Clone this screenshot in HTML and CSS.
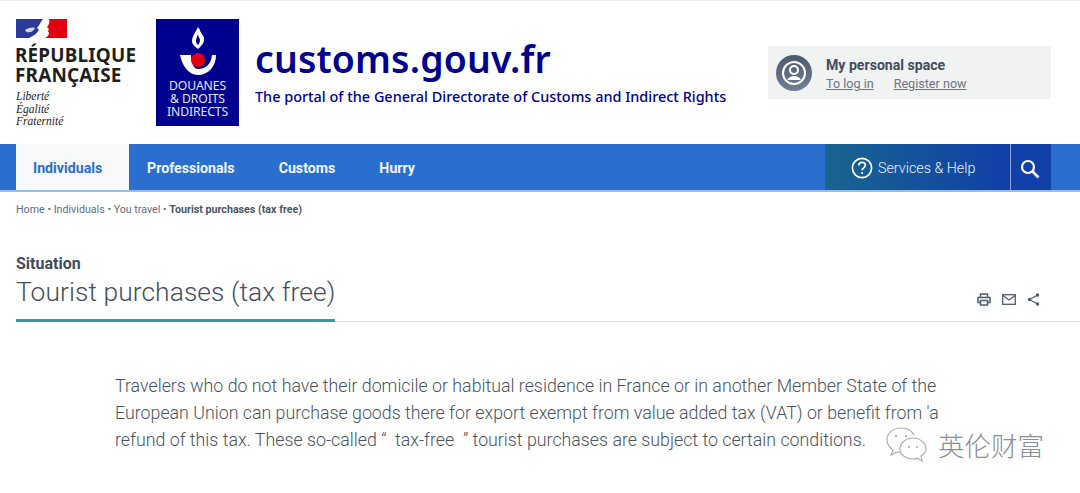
FILE: index.html
```html
<!DOCTYPE html>
<html lang="en">
<head>
<meta charset="utf-8">
<title>Tourist purchases (tax free)</title>
<link rel="stylesheet" href="styles.css">
</head>
<body>
<header class="masthead">
  <div class="rf">
    <svg class="rf-flag" width="51" height="19" viewBox="0 0 51 19"><rect width="51" height="19" fill="#fff"/><path d="M0 0H27C24 4 23 7 21 9L23 11C21 14 18 17 13 19H0z" fill="#2b3a97"/><path d="M9 11c3-2 7-3 10-2-1 2-3 4-5 4-2 1-4 0-5-2z" fill="#cfd4ea"/><path d="M33 0H51V19H29C31 18 33 16 33 14L32 12 33 10 31 8C33 6 34 3 33 0z" fill="#e1000f"/></svg>
    <div class="rf-name">RÉPUBLIQUE<br>FRANÇAISE</div>
    <div class="rf-motto">Liberté<br>Égalité<br>Fraternité</div>
  </div>
  <div class="ddi">
    <svg class="ddi-mark" width="38" height="50" viewBox="0 0 38 50"><path d="M19 0C17 5 13 9 13 14 13 18 17 20 19 22 22 19 25 17 25 12 25 8 21 6 21 3z" fill="#fff"/><path d="M19 7C18 10 17 12 17 14 17 16 18 17 19 18 20 17 21 15 21 13 21 11 19 10 19 7z" fill="#00008f"/><path d="M1 28H12C12 36 15 42 19 42 26 42 32 38 33 28H37C37 40 29 48 19 48 9 48 3 38 1 28z" fill="#fff"/><circle cx="19" cy="33" r="7" fill="#e1000f"/></svg>
    <div class="ddi-name">DOUANES<br>&amp; DROITS<br>INDIRECTS</div>
  </div>
  <div class="portal">
    <div class="portal-name">customs.gouv.fr</div>
    <div class="portal-tag">The portal of the General Directorate of Customs and Indirect Rights</div>
  </div>
  <div class="space">
    <svg class="space-ico" width="36" height="36" viewBox="0 0 36 36"><defs><linearGradient id="g" x1="0" y1="0" x2="0" y2="1"><stop offset="0" stop-color="#4d5a6b"/><stop offset="1" stop-color="#6f7f95"/></linearGradient></defs><circle cx="18" cy="18" r="18" fill="url(#g)"/><circle cx="18" cy="18" r="11" fill="none" stroke="#fff" stroke-width="2"/><circle cx="18" cy="15" r="4" fill="none" stroke="#fff" stroke-width="2"/><path d="M11 25c2-3 4-4 7-4s5 1 7 4" fill="#fff"/></svg>
    <div class="space-text">
      <div class="space-title">My personal space</div>
      <div class="space-links"><a href="#">To log in</a><a href="#">Register now</a></div>
    </div>
  </div>
</header>
<nav class="nav">
  <ul class="tabs">
    <li class="tab tab-on">Individuals</li>
    <li class="tab">Professionals</li>
    <li class="tab">Customs</li>
    <li class="tab">Hurry</li>
  </ul>
  <div class="help">
    <svg width="22" height="22" viewBox="0 0 22 22"><circle cx="11" cy="11" r="9.6" fill="none" stroke="#fff" stroke-width="1.7"/><path d="M7.8 8.6c0-2 1.5-3.2 3.3-3.2s3.2 1.2 3.2 2.9c0 2.5-3.2 2.6-3.2 5" fill="none" stroke="#fff" stroke-width="1.7"/><circle cx="11.1" cy="16" r="1.1" fill="#fff"/></svg>
    <span>Services &amp; Help</span>
  </div>
  <div class="find">
    <svg width="20" height="20" viewBox="0 0 20 20"><circle cx="8" cy="8" r="6" fill="none" stroke="#fff" stroke-width="2.2"/><path d="M12.5 12.5l6 6" stroke="#fff" stroke-width="2.6"/></svg>
  </div>
</nav>
<div class="crumbs">Home • Individuals • You travel • <b>Tourist purchases (tax free)</b></div>
<section class="head">
  <div class="kicker">Situation</div>
  <div class="title-row">
    <h1 class="title">Tourist purchases (tax free)</h1>
    <div class="tools">
      <svg width="14" height="13" viewBox="0 0 14 13"><path d="M3.5 4V1h7v3M3.5 9.5H1V4.5h12v5h-2.5M3.5 7.5h7V12h-7z" fill="none" stroke="#4f5b6b" stroke-width="1.5"/></svg>
      <svg width="14" height="11" viewBox="0 0 14 11"><rect x=".7" y=".7" width="12.6" height="9.6" fill="none" stroke="#4f5b6b" stroke-width="1.3"/><path d="M1 1.5l6 4.5 6-4.5" fill="none" stroke="#4f5b6b" stroke-width="1.3"/></svg>
      <svg width="13" height="13" viewBox="0 0 13 13"><path d="M10.5 2L2.5 6.5l8 4.5" fill="none" stroke="#4f5b6b" stroke-width="1.1"/><circle cx="10.5" cy="2" r="1.7" fill="#4f5b6b"/><circle cx="2.5" cy="6.5" r="1.7" fill="#4f5b6b"/><circle cx="10.5" cy="11" r="1.7" fill="#4f5b6b"/></svg>
    </div>
  </div>
</section>
<main class="body-text">
  <p>Travelers who do not have their domicile or habitual residence in France or in another Member State of the<br>European Union can purchase goods there for export exempt from value added tax (VAT) or benefit from 'a<br>refund of this tax. These so-called “&nbsp; tax-free &nbsp;” tourist purchases are subject to certain conditions.</p>
  <div class="mark">
    <svg width="42" height="36" viewBox="0 0 42 36"><path d="M15 1C7 1 1 6 1 13c0 4 2 7 6 10l-2 5 6-3c2 .6 3 .8 5 .8" fill="none" stroke="#aab0b5" stroke-width="1.2"/><path d="M28 8c-2-4-7-7-13-7" fill="none" stroke="#aab0b5" stroke-width="1.2"/><path d="M27 11c-7 0-13 5-13 11s6 10 13 10c2 0 3 0 4-1l5 3-1-5c3-2 5-4 5-7 0-6-6-11-13-11z" fill="#fff" stroke="#aab0b5" stroke-width="1.2"/><circle cx="10" cy="9" r="1.2" fill="#aab0b5"/><circle cx="20" cy="9" r="1.2" fill="#aab0b5"/><circle cx="23" cy="20" r="1.1" fill="#aab0b5"/><circle cx="31" cy="20" r="1.1" fill="#aab0b5"/></svg>
    <span>英伦财富</span>
  </div>
</main>
</body>
</html>
```
FILE: styles.css
```css
* { box-sizing: border-box; }
html, body { margin: 0; padding: 0; }
body { width: 1080px; height: 493px; overflow: hidden; background: #fff; font-family: Roboto, "Liberation Sans", sans-serif; color: #3f4a5a; border-top: 1px solid #eceded; }
.masthead { height: 143px; display: flex; align-items: flex-start; padding: 18px 0 0 16px; }
.rf { width: 140px; height: 110px; }
.rf-flag { display: block; }
.rf-name { margin: 7px 0 0 -1px; font: 700 18.9px/20px "Noto Sans", "Open Sans", sans-serif; color: #1e1e1e; letter-spacing: .2px; }
.rf-motto { margin-top: 5px; font: italic 11.5px/12.6px "Liberation Serif", serif; color: #222; }
.ddi { width: 83px; height: 107px; background: #00008f; display: flex; flex-direction: column; align-items: center; padding-top: 8px; color: #e4e7f5; }
.ddi-mark { display: block; }
.ddi-name { margin-top: 2px; font: 400 12.2px/13px "Noto Sans", sans-serif; text-align: center; letter-spacing: -.1px; }
.portal { margin-left: 16px; width: 513px; padding-top: 19px; }
.portal-name { font: 600 37.4px/42px "Noto Sans", sans-serif; color: #00008f; letter-spacing: .15px; }
.portal-tag { margin-top: 8px; font: 500 14.45px/18px "Noto Sans", sans-serif; color: #00008f; white-space: nowrap; }
.space { width: 283px; height: 53px; margin-top: 27px; background: #f1f2f2; display: flex; align-items: center; padding-left: 8px; gap: 14px; }
.space-ico { display: block; }
.space-title { font-size: 14.1px; line-height: 18px; font-weight: 700; color: #434c5c; margin-top: 4px; }
.space-links { display: flex; gap: 20px; font-size: 12.6px; line-height: 19px; }
.space-links a { color: #6c7686; }
.nav { height: 48px; background: #2a6fd0; border-bottom: 2px solid #8fc0ee; display: flex; padding-left: 16px; }
.tabs { list-style: none; margin: 0; padding: 0; display: flex; gap: 44px; width: 809px; }
.tab { padding-top: 1px; line-height: 46px; font-size: 14.2px; font-weight: 700; color: #f2f6fd; }
.tab-on { background: #f8f9fa; color: #2a6fd0; width: 113px; padding-left: 17px; margin-right: -26px; }
.help { width: 185px; background: linear-gradient(90deg, #18658f, #103fa8); display: flex; align-items: center; gap: 5px; padding: 1px 0 0 26px; color: #e8effa; font-size: 14.3px; font-weight: 300; }
.find { width: 41px; background: #1141a8; border-left: 1px solid #8aa5d8; display: flex; align-items: center; justify-content: center; padding: 3px 2px 0 0; }
.crumbs { padding: 11px 16px 0; font-size: 10.7px; line-height: 14px; color: #636d7b; }
.crumbs b { color: #4c5563; }
.head { margin: 0 40px 0 16px; padding-top: 38px; }
.kicker { font-size: 16px; line-height: 18px; font-weight: 700; color: #434c5c; }
.title-row { display: flex; justify-content: space-between; border-bottom: 1px solid #dddfe1; margin-right: -40px; height: 49px; padding-right: 40px; }
.title { margin: 0 0 -1px; height: 49px; border-bottom: 3px solid #3f9a9f; font-size: 26.4px; line-height: 38px; font-weight: 300; color: #454e5d; letter-spacing: .07px; white-space: nowrap; }
.tools { display: flex; gap: 11px; align-items: center; height: 20px; margin-top: 16px; }
.body-text { position: relative; padding: 50px 0 0 115px; }
.body-text p { margin: 0; font-size: 17.8px; line-height: 27px; font-weight: 300; color: #4a5360; white-space: nowrap; }
.mark { position: absolute; left: 886px; top: 105px; display: flex; align-items: center; gap: 10px; color: #8b9095; font: 300 26.5px/30px "Noto Sans CJK SC", sans-serif; }
```
